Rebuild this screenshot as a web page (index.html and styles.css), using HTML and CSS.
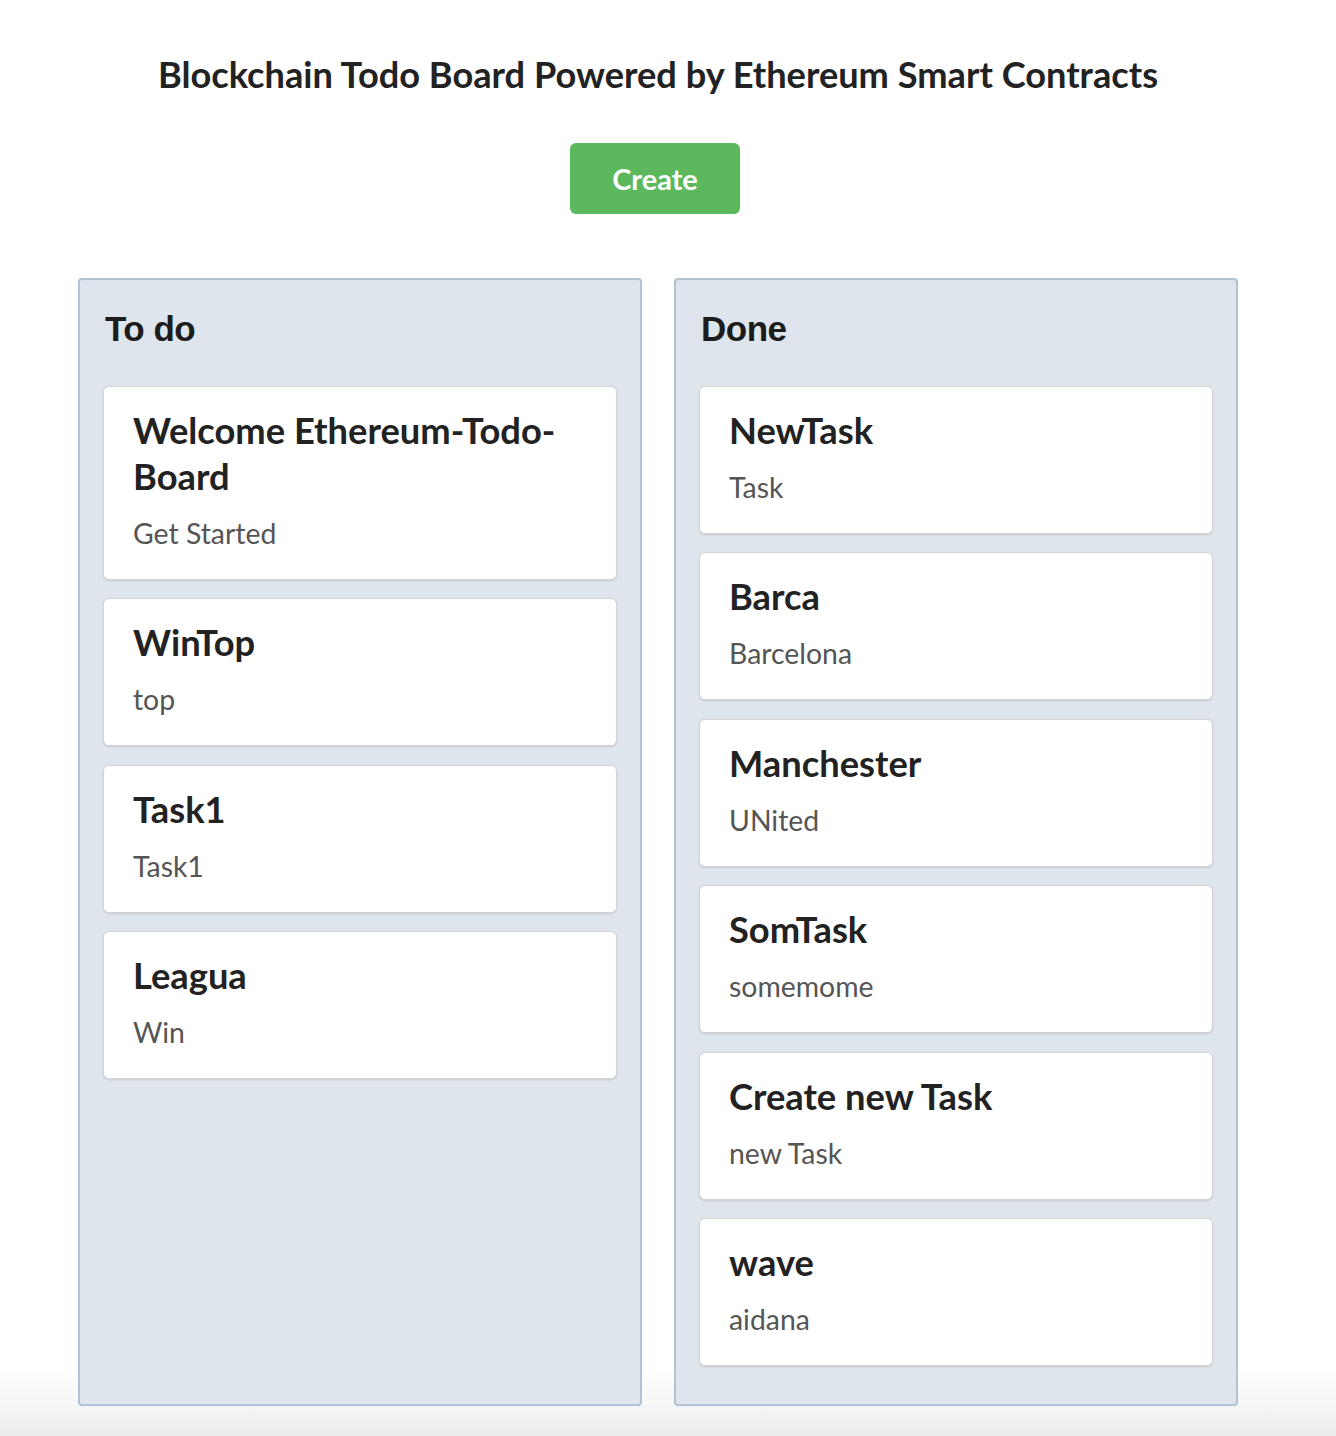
FILE: index.html
```html
<!DOCTYPE html>
<html>
<head>
<meta charset="utf-8">
<link rel="stylesheet" href="styles.css">
</head>
<body>
<div class="page">
  <h1 class="title">Blockchain Todo Board Powered by Ethereum Smart Contracts</h1>
  <div class="actions"><button class="btn-create">Create</button></div>
  <div class="board">
    <section class="column">
      <h2 class="col-title">To do</h2>
      <div class="cards">
        <div class="card"><div class="card-title">Welcome Ethereum-Todo-Board</div><div class="card-sub">Get Started</div></div>
        <div class="card"><div class="card-title">WinTop</div><div class="card-sub">top</div></div>
        <div class="card"><div class="card-title">Task1</div><div class="card-sub">Task1</div></div>
        <div class="card"><div class="card-title">Leagua</div><div class="card-sub">Win</div></div>
      </div>
    </section>
    <section class="column">
      <h2 class="col-title">Done</h2>
      <div class="cards">
        <div class="card"><div class="card-title">NewTask</div><div class="card-sub">Task</div></div>
        <div class="card"><div class="card-title">Barca</div><div class="card-sub">Barcelona</div></div>
        <div class="card"><div class="card-title">Manchester</div><div class="card-sub">UNited</div></div>
        <div class="card"><div class="card-title">SomTask</div><div class="card-sub">somemome</div></div>
        <div class="card"><div class="card-title">Create new Task</div><div class="card-sub">new Task</div></div>
        <div class="card"><div class="card-title">wave</div><div class="card-sub">aidana</div></div>
      </div>
    </section>
  </div>
</div>
</body>
</html>
```

FILE: styles.css
```css
html {
  background: linear-gradient(to bottom, #ffffff 0px, #ffffff 1370px, #ededed 1436px);
  min-height: 1436px;
}
body {
  margin: 0;
  font-family: Lato, "Open Sans", sans-serif;
  color: #222;
}
.page {
  width: 1336px;
  box-sizing: border-box;
  padding-top: 53px;
}
.title {
  margin: 0;
  text-align: center;
  font-size: 36.2px;
  font-weight: 700;
  line-height: 42px;
  color: #222;
  padding-right: 20px;
}
.actions {
  display: flex;
  justify-content: center;
  margin-top: 48px;
  padding-right: 26px;
}
.btn-create {
  width: 170px;
  height: 71px;
  border: none;
  border-radius: 6px;
  background: #5cb85c;
  color: #fff;
  font-family: Lato, sans-serif;
  font-weight: 700;
  font-size: 29px;
  padding: 0;
}
.board {
  display: flex;
  gap: 32px;
  margin-top: 64px;
  padding-left: 78px;
}
.column {
  width: 564px;
  box-sizing: border-box;
  background: #dfe5ec;
  border: 2px solid #b1c2d2;
  border-radius: 4px;
  padding: 25px 23px 38px 23px;
}
.col-title {
  margin: 0 0 0 2px;
  font-family: "Liberation Sans", Arial, sans-serif;
  font-weight: 700;
  font-size: 35px;
  line-height: 48px;
  color: #1c1c1c;
  letter-spacing: -0.5px;
}
.cards {
  display: flex;
  flex-direction: column;
  gap: 18.4px;
  margin-top: 33px;
}
.card {
  background: #fff;
  border: 1px solid #d4d4d4;
  border-radius: 6px;
  box-shadow: 0 1px 2px rgba(0,0,0,0.12);
  padding: 20px 30px 30px 29px;
}
.card-title {
  font-size: 36.3px;
  font-weight: 700;
  line-height: 46px;
  color: #222;
}
.card-sub {
  margin-top: 18px;
  font-size: 28.4px;
  line-height: 32px;
  color: #555;
}
```
